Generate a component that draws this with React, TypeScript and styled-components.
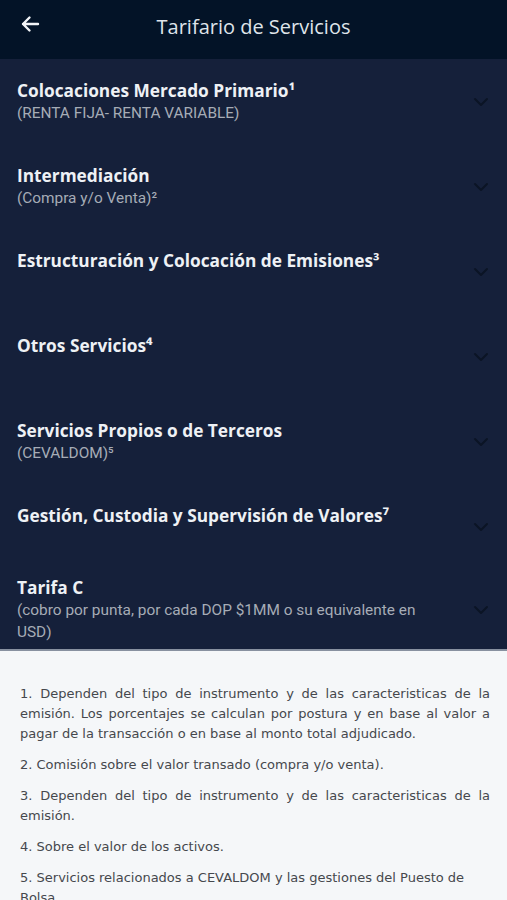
import React from "react";
import styled, { createGlobalStyle } from "styled-components";

const GlobalStyle = createGlobalStyle`
  html, body {
    margin: 0;
    padding: 0;
    background: #f5f7f9;
  }
  * {
    box-sizing: border-box;
  }
`;

type Service = {
  title: string;
  detail?: string;
};

const services: Service[] = [
  { title: "Colocaciones Mercado Primario¹", detail: "(RENTA FIJA- RENTA VARIABLE)" },
  { title: "Intermediación", detail: "(Compra y/o Venta)²" },
  { title: "Estructuración y Colocación de Emisiones³" },
  { title: "Otros Servicios⁴" },
  { title: "Servicios Propios o de Terceros", detail: "(CEVALDOM)⁵" },
  { title: "Gestión, Custodia y Supervisión de Valores⁷" },
  {
    title: "Tarifa C",
    detail: "(cobro por punta, por cada DOP $1MM o su equivalente en USD)",
  },
];

type FootNote = {
  text: string;
  ragged?: boolean;
};

const notes: FootNote[] = [
  {
    text: "1. Dependen del tipo de instrumento y de las caracteristicas de la emisión. Los porcentajes se calculan por postura y en base al valor a pagar de la transacción o en base al monto total adjudicado.",
  },
  { text: "2. Comisión sobre el valor transado (compra y/o venta)." },
  { text: "3. Dependen del tipo de instrumento y de las caracteristicas de la emisión." },
  { text: "4. Sobre el valor de los activos." },
  {
    text: "5. Servicios relacionados a CEVALDOM y las gestiones del Puesto de Bolsa.",
    ragged: true,
  },
];

const App = () => {
  return (
    <Screen>
      <GlobalStyle />
      <Header>
        <BackButton aria-label="Volver">
          <svg width="20" height="18" viewBox="0 0 20 18" fill="none">
            <path
              d="M18 9H3M9.5 2.5L3 9l6.5 6.5"
              stroke="#f2f4f7"
              strokeWidth="2.4"
              strokeLinecap="round"
              strokeLinejoin="round"
            />
          </svg>
        </BackButton>
        <HeaderTitle>Tarifario de Servicios</HeaderTitle>
      </Header>

      <ServiceList>
        {services.map((s, i) => (
          <ServiceRow key={s.title} $tight={i === services.length - 1}>
            <RowText>
              <RowTitle>{s.title}</RowTitle>
              <RowDetail>{s.detail ?? "\u00a0"}</RowDetail>
            </RowText>
            <Chevron>
              <svg width="16" height="10" viewBox="0 0 16 10" fill="none">
                <path
                  d="M2 2l6 6 6-6"
                  stroke="#0b1425"
                  strokeWidth="2"
                  strokeLinecap="round"
                  strokeLinejoin="round"
                />
              </svg>
            </Chevron>
          </ServiceRow>
        ))}
      </ServiceList>

      <Notes>
        {notes.map((n) => (
          <Note key={n.text} $ragged={n.ragged}>
            {n.text}
          </Note>
        ))}
      </Notes>
    </Screen>
  );
};

const Screen = styled.div`
  width: 507px;
  height: 900px;
  overflow: hidden;
  display: flex;
  flex-direction: column;
  background: #f5f7f9;
`;

const Header = styled.header`
  height: 59px;
  flex-shrink: 0;
  background: #031327;
  display: flex;
  align-items: center;
  position: relative;
  padding: 0 20px;
`;

const BackButton = styled.button`
  border: 0;
  background: none;
  padding: 0;
  display: flex;
  margin-top: -12px;
  cursor: pointer;
`;

const HeaderTitle = styled.h1`
  position: absolute;
  left: 0;
  right: 0;
  top: 15px;
  margin: 0;
  text-align: center;
  font-family: "Open Sans", sans-serif;
  font-weight: 400;
  font-size: 20px;
  line-height: 24px;
  color: #dfe4ea;
  pointer-events: none;
`;

const ServiceList = styled.div`
  height: 592px;
  flex-shrink: 0;
  overflow: hidden;
  background: #15203a;
  border-bottom: 2px solid #8891a0;
`;

const ServiceRow = styled.div<{ $tight?: boolean }>`
  display: flex;
  align-items: center;
  min-height: ${(p) => (p.$tight ? "80px" : "85px")};
  padding: ${(p) => (p.$tight ? "8px" : "20px")} 18px 20px 17px;
`;

const RowText = styled.div`
  flex: 1;
  display: flex;
  flex-direction: column;
  padding-right: 40px;
`;

const RowTitle = styled.div`
  font-family: "Open Sans", sans-serif;
  font-weight: 700;
  font-size: 17.3px;
  line-height: 22px;
  color: #eef1f5;
`;

const RowDetail = styled.div`
  font-family: Roboto, sans-serif;
  font-size: 15.4px;
  line-height: 22px;
  color: #a6acb6;
`;

const Chevron = styled.div`
  width: 16px;
  display: flex;
  justify-content: center;
  flex-shrink: 0;
`;

const Notes = styled.div`
  padding: 33px 17px 0 20px;
  display: flex;
  flex-direction: column;
  gap: 11px;
`;

const Note = styled.p<{ $ragged?: boolean }>`
  margin: 0;
  font-family: "DejaVu Sans", sans-serif;
  font-weight: 400;
  font-size: 13px;
  line-height: 20px;
  color: #45484d;
  text-align: ${(p) => (p.$ragged ? "left" : "justify")};
`;

export default App;
